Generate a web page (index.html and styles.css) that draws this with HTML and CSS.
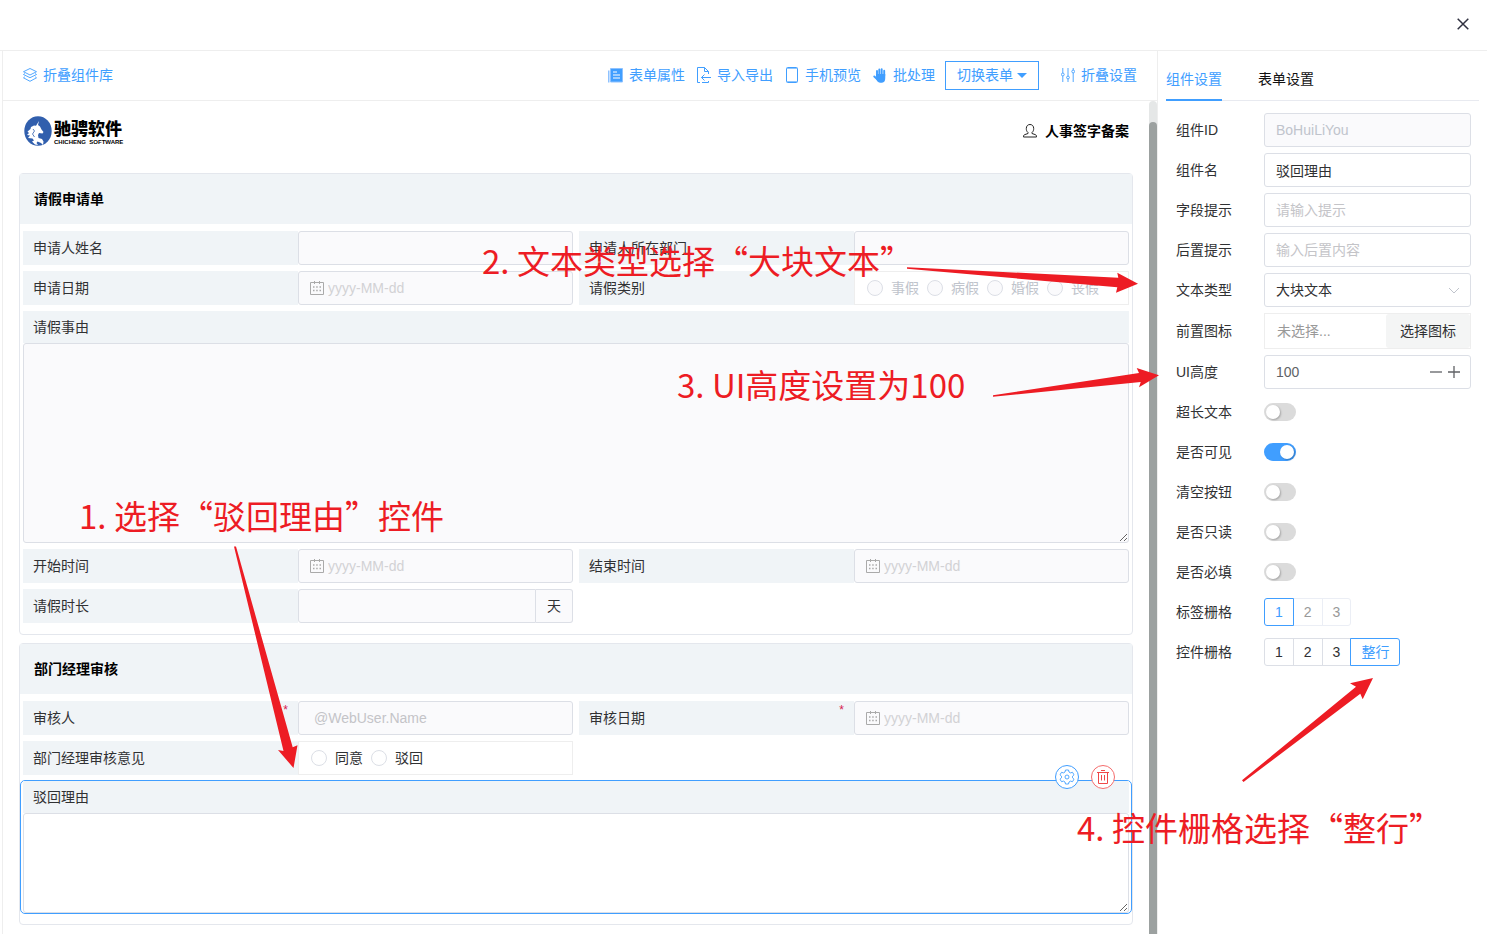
FILE: index.html
```html
<!DOCTYPE html>
<html lang="zh-CN">
<head>
<meta charset="utf-8">
<title>表单设计器</title>
<link rel="stylesheet" href="styles.css">
</head>
<body>
<svg class="defs" width="0" height="0" aria-hidden="true">
  <symbol id="calendar" viewBox="0 0 14 14"><path d="M.5 1.500h13v12H.5zM4.500 0v3M9.500 0v3" fill="none" stroke="currentColor"/><path d="M3 6h1.500M6.200 6h1.500M9.500 6H11M3 9.500h1.500M6.200 9.500h1.500M9.500 9.500H11" stroke="currentColor" stroke-width="1.500"/></symbol>
</svg>
<div class="dialog">
  <header class="dialog-head">
    <button class="close" aria-label="关闭"><svg width="12" height="12" viewBox="0 0 12 12"><path d="M.7.7l10.600 10.600M11.300.7L.7 11.300" stroke="#303140" stroke-width="1.500"/></svg></button>
  </header>
  <div class="workspace">
    <main class="designer">
      <nav class="toolbar">
        <button class="tool"><svg width="14" height="14" viewBox="0 0 14 14" fill="none" stroke="currentColor" stroke-width="0.900"><path d="M7 .5l6.500 3.200L7 7 .5 3.700zM1.800 5.500L.5 6.500 7 9.700l6.500-3.200-1.300-1M1.800 8.800L.5 9.800 7 13.300l6.500-3.500-1.300-1"/></svg>折叠组件库</button>
        <div class="tools">
          <div class="tool-group">
            <button class="tool"><svg width="15" height="15" viewBox="0 0 15 15"><path d="M0 2.500h1.500v12H0z" fill="#8ec2ff"/><path d="M2.500.5h12v13.500h-12z" fill="#409eff" stroke="#8ec2ff"/><path d="M5 4h4M5 7h7M5 10h7" stroke="#fff"/></svg>表单属性</button>
            <button class="tool"><svg width="14" height="16" viewBox="0 0 14 16" fill="none" stroke="currentColor"><path d="M11.500 7V4.500L7.500.5H.5v15H3M7.500.5v4h4M4.500 10.500H14M7.500 7.500l-3 3 3 3M5 15.500h6.500V14"/></svg>导入导出</button>
            <button class="tool"><svg width="14" height="16" viewBox="0 0 14 16" fill="none" stroke="currentColor"><rect x="1.500" y=".5" width="11" height="15" rx="1"/><path d="M2 1.500h10M2 14.500h10" stroke-opacity=".6"/></svg>手机预览</button>
            <button class="tool"><svg width="14" height="15" viewBox="0 0 14 15" fill="none" stroke="currentColor" stroke-width="1.900" stroke-linecap="round"><path d="M4 8V3M6.300 8V1.500M8.700 8V1.200M11.200 8V2.700M1.300 8.500L4 11"/><path d="M4 7h7.300v3c0 2-1 3.700-2.300 3.700H7C5.600 13.700 4 12 4 10z" fill="currentColor"/></svg>批处理</button>
          </div>
          <button class="switch-form">切换表单<svg width="10" height="5" viewBox="0 0 10 5"><path d="M0 0h10L5 5z" fill="currentColor"/></svg></button>
          <button class="tool"><svg width="14" height="14" viewBox="0 0 14 14" fill="none" stroke="currentColor" stroke-width="0.900"><path d="M1.800 0v5M1.800 8v6M7 0v8M7 11v3M12.200 0v2M12.200 5v9"/><circle cx="1.800" cy="6.500" r="1.400"/><circle cx="7" cy="9.500" r="1.400"/><circle cx="12.200" cy="3.500" r="1.400"/></svg>折叠设置</button>
        </div>
      </nav>
      <div class="viewport">
        <div class="canvas">
          <div class="brand-row">
            <div class="brand">
              <svg width="28" height="30" viewBox="0 0 28 30"><ellipse cx="14" cy="15" rx="13.700" ry="14.800" fill="#315fad"/><path d="M15 5l-1 4 2 1.500 1.500 3 2 2.500-1 1.500-3.500-.5-1 2 .5 3 3.500 1 1.500 2.500-.5 3.500-2-2-3.500-1.500-1 1.500 1.500 2-3-.5-3-3 2-1-1.500-2L4 22l2-2.500L3 19l2-2-1.500-1.500L6.500 13l.5-2 3-1.500 2 .2z" fill="#fff"/><path d="M9 13l1.500 2-2 3 2 3" fill="none" stroke="#315fad" stroke-width=".8"/></svg>
              <div class="brand-text"><strong>驰骋软件</strong><small>CHICHENG&nbsp; SOFTWARE</small></div>
            </div>
            <div class="flow-name"><svg width="14" height="14" viewBox="0 0 14 14" fill="none" stroke="#222"><path d="M5 8.500C3.700 7.500 3.300 6 3.300 4.500 3.300 2 4.800.5 7 .5s3.700 1.500 3.700 4c0 1.500-.4 3-1.700 4v1l3.500 1.200c.8.300 1 1 1 2.300H.5c0-1.300.2-2 1-2.300L5 9.500z"/></svg>人事签字备案</div>
          </div>
          <section class="card">
            <h2>请假申请单</h2>
            <div class="grid">
              <div class="field"><label for="f1">申请人姓名</label><input id="f1" class="box" disabled></div>
              <div class="field"><label for="f2">申请人所在部门</label><input id="f2" class="box" disabled></div>
              <div class="field"><label for="f3">申请日期</label><div class="date"><svg width="14" height="14"><use href="#calendar"/></svg><input id="f3" class="box" placeholder="yyyy-MM-dd" disabled></div></div>
              <div class="field" role="radiogroup" aria-labelledby="f4"><span id="f4" class="label">请假类别</span><div class="radios"><label><input type="radio" name="kind" disabled>事假</label><label><input type="radio" name="kind" disabled>病假</label><label><input type="radio" name="kind" disabled>婚假</label><label><input type="radio" name="kind" disabled>丧假</label></div></div>
              <div class="field wide"><label for="f5">请假事由</label><textarea id="f5" class="box tall" disabled></textarea></div>
              <div class="field"><label for="f6">开始时间</label><div class="date"><svg width="14" height="14"><use href="#calendar"/></svg><input id="f6" class="box" placeholder="yyyy-MM-dd" disabled></div></div>
              <div class="field"><label for="f7">结束时间</label><div class="date"><svg width="14" height="14"><use href="#calendar"/></svg><input id="f7" class="box" placeholder="yyyy-MM-dd" disabled></div></div>
              <div class="field"><label for="f8">请假时长</label><div class="unit"><input id="f8" class="box" disabled><span>天</span></div></div>
            </div>
          </section>
          <section class="card">
            <h2>部门经理审核</h2>
            <div class="grid">
              <div class="field"><label for="g1">审核人<i>*</i></label><input id="g1" class="box indented" placeholder="@WebUser.Name" disabled></div>
              <div class="field"><label for="g2">审核日期<i>*</i></label><div class="date"><svg width="14" height="14"><use href="#calendar"/></svg><input id="g2" class="box" placeholder="yyyy-MM-dd" disabled></div></div>
              <div class="field" role="radiogroup" aria-labelledby="g3"><span id="g3" class="label">部门经理审核意见</span><div class="radios"><label><input type="radio" name="opinion">同意</label><label><input type="radio" name="opinion">驳回</label></div></div>
              <div class="field wide selected"><label for="g4">驳回理由</label><textarea id="g4" class="box"></textarea>
                <div class="actions">
                  <button class="round" aria-label="设置"><svg width="16" height="16" viewBox="0 0 16 16" fill="none" stroke="currentColor" stroke-width="0.900"><path d="M6.500 1h3l.5 2 1.500.9 2-.6 1.500 2.500L13.500 7.200v1.600L15 10.200l-1.500 2.500-2-.6L10 13l-.5 2h-3L6 13l-1.500-.9-2 .6L1 10.200l1.500-1.400V7.200L1 5.800l1.500-2.500 2 .6L6 3z" stroke-linejoin="round"/><circle cx="8" cy="8" r="2"/></svg></button>
                  <button class="round danger" aria-label="删除"><svg width="14" height="16" viewBox="0 0 14 16" fill="none" stroke="currentColor"><path d="M1 3.500h12M5 1.500h4M2.500 3.500v11h9v-11M5.500 6v5.500M8.500 6v5.500"/></svg></button>
                </div>
              </div>
            </div>
          </section>
        </div>
        <div class="scrollbar"><div class="thumb"></div></div>
      </div>
    </main>
    <aside class="settings">
      <div class="tabs" role="tablist"><button role="tab" aria-selected="true" class="tab active">组件设置</button><button role="tab" aria-selected="false" class="tab">表单设置</button></div>
      <form class="props">
        <div class="prop"><label for="p1">组件ID</label><input id="p1" class="box" value="BoHuiLiYou" disabled></div>
        <div class="prop"><label for="p2">组件名</label><input id="p2" class="box" value="驳回理由"></div>
        <div class="prop"><label for="p3">字段提示</label><input id="p3" class="box" placeholder="请输入提示"></div>
        <div class="prop"><label for="p4">后置提示</label><input id="p4" class="box" placeholder="输入后置内容"></div>
        <div class="prop"><label for="p5">文本类型</label><div class="select"><select id="p5" class="box"><option>大块文本</option></select><svg width="12" height="7" viewBox="0 0 12 7"><path d="M1 1l5 5 5-5" fill="none" stroke="#c0c4cc"/></svg></div></div>
        <div class="prop"><span class="name">前置图标</span><div class="icon-pick"><span>未选择...</span><button type="button">选择图标</button></div></div>
        <div class="prop"><label for="p7">UI高度</label><div class="number box"><input id="p7" value="100"><button type="button" aria-label="减少"><svg width="12" height="12" viewBox="0 0 12 12"><path d="M0 6h12" stroke="#606266" stroke-width="1.300"/></svg></button><button type="button" aria-label="增加"><svg width="12" height="12" viewBox="0 0 12 12"><path d="M0 6h12M6 0v12" stroke="#606266" stroke-width="1.300"/></svg></button></div></div>
        <div class="prop"><label for="s1">超长文本</label><input id="s1" type="checkbox" class="switch"></div>
        <div class="prop"><label for="s2">是否可见</label><input id="s2" type="checkbox" class="switch" checked></div>
        <div class="prop"><label for="s3">清空按钮</label><input id="s3" type="checkbox" class="switch"></div>
        <div class="prop"><label for="s4">是否只读</label><input id="s4" type="checkbox" class="switch"></div>
        <div class="prop"><label for="s5">是否必填</label><input id="s5" type="checkbox" class="switch"></div>
        <div class="prop"><span class="name">标签栅格</span><div class="segments muted"><button type="button" class="on">1</button><button type="button">2</button><button type="button">3</button></div></div>
        <div class="prop"><span class="name">控件栅格</span><div class="segments"><button type="button">1</button><button type="button">2</button><button type="button">3</button><button type="button" class="on">整行</button></div></div>
      </form>
    </aside>
  </div>
</div>
<div class="notes">
  <svg width="1487" height="934" viewBox="0 0 1487 934" fill="#ed1c24" aria-hidden="true">
    <path d="M234 546.500L236 546.500 292.700 747.300 297.500 745.300 293.500 768 278 750 283.500 751z"/>
    <path d="M907 267.200L1118.300 277.700 1117.300 272.700 1138 283.700 1116 292.700 1117.300 287.300 907 268.800z"/>
    <path d="M993 395.200L1139 373 1136.700 368 1159 375.300 1139 387.300 1140.700 382 993 396.800z"/>
    <path d="M1242 780.300L1356 686.700 1350 683.300 1373 678 1362.700 699.300 1360.300 693.700 1243.500 782z"/>
  </svg>
  <p class="note one">1. 选择“驳回理由”控件</p>
  <p class="note two">2. 文本类型选择“大块文本”</p>
  <p class="note three">3. UI高度设置为100</p>
  <p class="note four">4. 控件栅格选择“整行”</p>
</div>
</body>
</html>
```
FILE: styles.css
```css
* { box-sizing: border-box; }
body {
  margin: 0;
  position: relative;
  background: #fff;
  color: #303133;
  font: 14px/20px "Liberation Sans", "Noto Sans CJK SC", sans-serif;
}
button, input, select, textarea { font: inherit; color: inherit; margin: 0; }
button { background: none; border: 0; padding: 0; cursor: pointer; }
svg { display: block; flex: none; }
.defs { position: absolute; }

.dialog { display: flex; flex-direction: column; min-height: 100vh; }
.dialog-head {
  display: flex;
  align-items: center;
  justify-content: flex-end;
  height: 51px;
  padding: 0 18px 2px 0;
  border-bottom: 1px solid #eee;
}
.workspace { display: flex; flex: 1; }
.designer {
  display: flex;
  flex-direction: column;
  flex: 1;
  min-width: 0;
  margin-left: 2px;
  border-left: 1px solid #eee;
}

.toolbar {
  display: flex;
  align-items: center;
  justify-content: space-between;
  height: 50px;
  padding: 0 20px 1px;
  border-bottom: 1px solid #eee;
  color: #409eff;
}
.tools { display: flex; align-items: center; gap: 10px; }
.tool-group { display: flex; gap: 12px; }
.tool { display: flex; align-items: center; gap: 6px; white-space: nowrap; }
.switch-form {
  display: flex;
  align-items: center;
  gap: 4px;
  height: 29px;
  margin-right: 12px;
  padding: 0 11px;
  border: 1px solid #409eff;
}

.viewport { display: flex; flex: 1; }
.canvas { flex: 1; min-width: 0; padding: 0 16px 9px; }
.scrollbar {
  width: 8px;
  padding-top: 21px;
  border-radius: 4px 4px 0 0;
  background: #e5e7e7;
}
.thumb { height: 100%; border-radius: 4px 4px 0 0; background: #9ca1a0; }

.brand-row {
  display: flex;
  align-items: center;
  justify-content: space-between;
  height: 72px;
  padding: 0 4px 12px 5px;
}
.brand { display: flex; align-items: center; gap: 2px; }
.brand-text { display: flex; flex-direction: column; padding-top: 4px; color: #000; }
.brand-text strong { font-size: 17px; font-weight: 900; line-height: 18px; }
.brand-text small { font-size: 6px; font-weight: 700; line-height: 6px; white-space: nowrap; }
.flow-name { display: flex; align-items: center; gap: 8px; font-weight: 700; color: #000; }

.card { border: 1px solid #e4e7ed; border-radius: 4px; }
.card + .card { margin-top: 8px; }
.card h2 {
  margin: 0;
  padding: 0 14px;
  background: #f0f4f7;
  color: #000;
  font-size: 14px;
  line-height: 50px;
}
.grid {
  display: grid;
  grid-template-columns: 1fr 1fr;
  gap: 6px;
  padding: 7px 3px 11px;
}
.field { display: grid; grid-template-columns: 1fr 1fr; min-width: 0; }
.field > label, .label {
  position: relative;
  padding-left: 10px;
  background: #f0f4f7;
  line-height: 34px;
}
.field i {
  position: absolute;
  top: 2px;
  right: 10px;
  color: #d6204e;
  font-size: 12px;
  font-style: normal;
  line-height: 14px;
}
.wide { grid-column: 1 / -1; grid-template-columns: 1fr; }
.wide > label { line-height: 32px; }

.box {
  display: block;
  width: 100%;
  height: 34px;
  padding: 0 11px;
  border: 1px solid #dcdfe6;
  border-radius: 3px;
  background: #fff;
  outline: 0;
}
.box:disabled { background: #fafafc; color: #c0c4cc; }
.box::placeholder { color: #c4c4c8; opacity: 1; }
.box.indented { padding-left: 15px; }
textarea.box { height: 100px; resize: vertical; }
textarea.tall { height: 200px; }
.date { position: relative; }
.date svg { position: absolute; left: 12px; top: 10px; color: #aaa; }
.date .box { padding-left: 29px; }
.date .box::placeholder { color: #d2d2d5; }
.unit { display: flex; }
.unit .box { flex: 1; min-width: 0; border-radius: 3px 0 0 3px; }
.unit span {
  width: 37px;
  border: 1px solid #dcdfe6;
  border-left: 0;
  border-radius: 0 3px 3px 0;
  background: #fafafc;
  line-height: 32px;
  text-align: center;
}
.radios {
  display: flex;
  align-items: center;
  gap: 8px;
  padding-left: 12px;
  border: 1px solid #eee;
}
.radios label { display: flex; align-items: center; gap: 8px; }
.radios label:has(:disabled) { color: #c0c4cc; }
.radios input {
  appearance: none;
  width: 16px;
  height: 16px;
  border: 1px solid #dcdfe6;
  border-radius: 50%;
}
.radios input:disabled { background: #fafafc; }
.selected {
  position: relative;
  margin: -1px -3px -1px;
  padding: 0 2px;
  border: 1px solid #409eff;
  border-radius: 5px;
}
.actions { position: absolute; top: -16px; right: 16px; display: flex; gap: 12px; }
.round {
  display: grid;
  place-items: center;
  width: 24px;
  height: 24px;
  border: 1px solid #409eff;
  border-radius: 50%;
  background: #fff;
  color: #409eff;
}
.danger { border-color: #f56c6c; color: #f04848; }

.settings { width: 330px; border-left: 1px solid #eee; padding: 0 8px; }
.tabs { display: flex; gap: 36px; height: 50px; border-bottom: 1px solid #e8eaf0; color: #111; }
.tab { height: 50px; padding-top: 8px; border-bottom: 2px solid transparent; }
.tab.active { color: #409eff; border-color: #409eff; }
.props { display: flex; flex-direction: column; gap: 6px; padding: 12px 8px 0 10px; }
.prop {
  display: grid;
  grid-template-columns: 88px minmax(0, 1fr);
  align-items: center;
  min-height: 34px;
}
.select { position: relative; }
.select select { appearance: none; }
.select svg { position: absolute; right: 11px; top: 14px; pointer-events: none; }
.icon-pick { display: flex; height: 36px; border: 1px solid #eee; }
.icon-pick span { flex: 1; padding-left: 12px; color: #999; line-height: 34px; }
.icon-pick button { width: 84px; border-radius: 3px; background: #f4f5f5; }
.number { display: flex; align-items: center; gap: 6px; padding-right: 10px; }
.number input { flex: 1; min-width: 0; padding: 0; border: 0; outline: 0; color: #606266; }
.switch {
  appearance: none;
  width: 32px;
  height: 18px;
  padding: 2px;
  border-radius: 9px;
  background: #dbdbdb;
}
.switch::before {
  content: "";
  display: block;
  width: 14px;
  height: 14px;
  border-radius: 50%;
  background: #fff;
  box-shadow: 1px 1px 2px rgba(0, 0, 0, .25);
}
.switch:checked { background: #409eff; }
.switch:checked::before { margin-left: 14px; }
.segments { display: flex; }
.segments button {
  height: 28px;
  padding: 0 10px;
  border: 1px solid #dcdfe6;
}
.segments button + button { margin-left: -1px; }
.segments button:first-child { border-radius: 3px 0 0 3px; }
.segments button:last-child { border-radius: 0 3px 3px 0; }
.muted button { border-color: #ebeef5; color: #999; }
.segments .on { position: relative; border-color: #409eff; color: #409eff; }

.notes { position: absolute; inset: 0; overflow: hidden; pointer-events: none; }
.note {
  position: absolute;
  margin: 0;
  color: #ed1c24;
  font: 33px/40px "Noto Sans CJK SC", sans-serif;
  white-space: nowrap;
}
.one { left: 79px; top: 495px; }
.two { left: 482px; top: 240px; }
.three { left: 677px; top: 364px; }
.four { left: 1077px; top: 807px; }
```
